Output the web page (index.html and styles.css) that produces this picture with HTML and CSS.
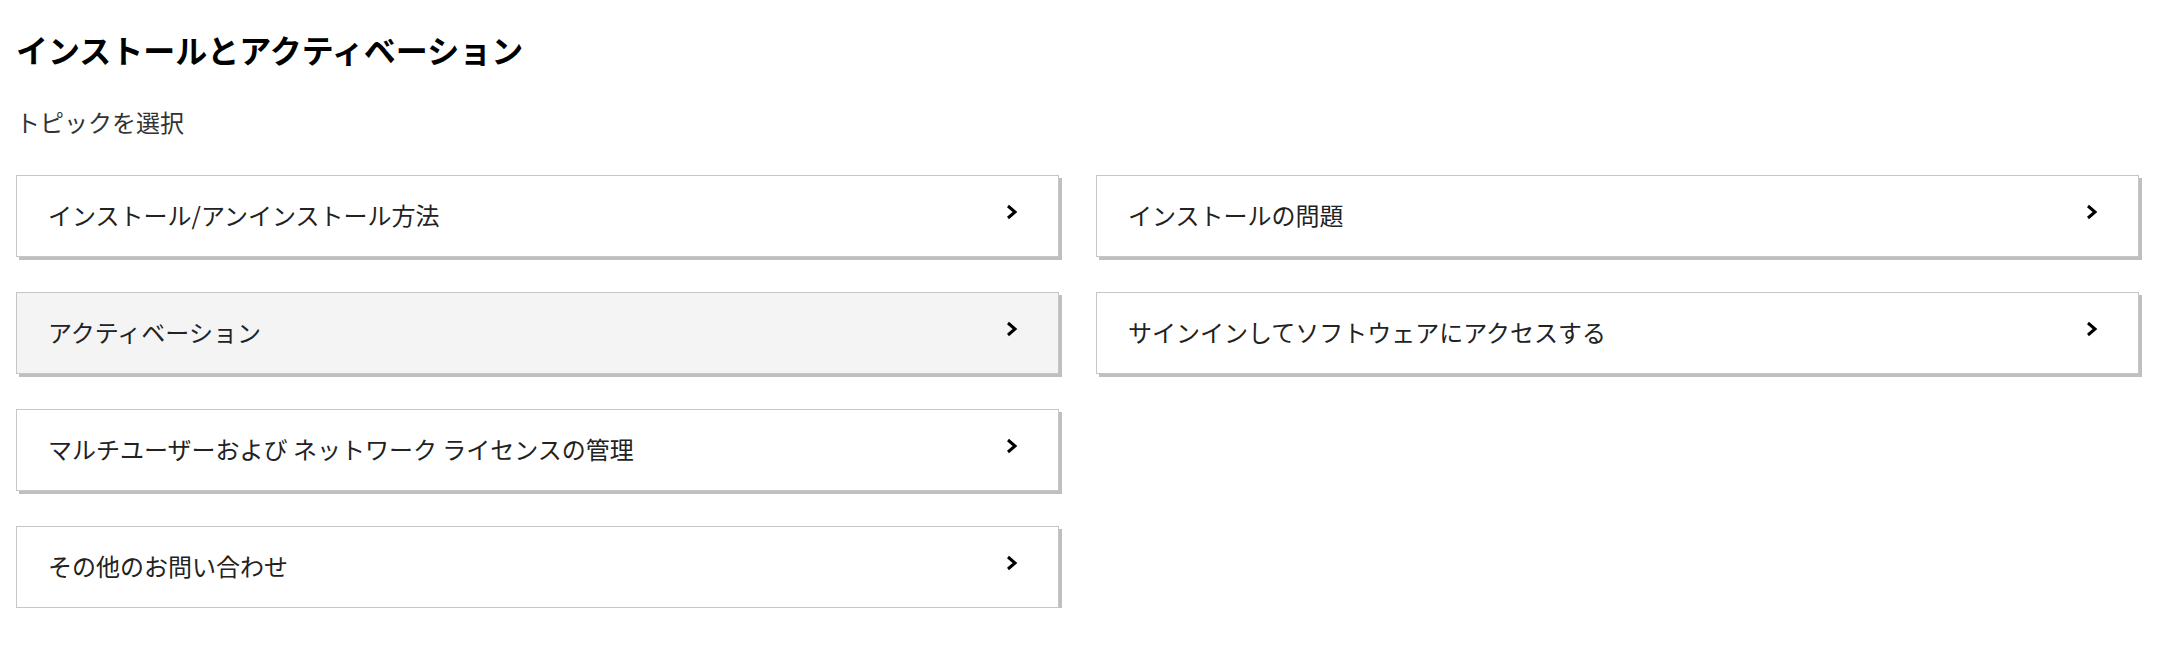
FILE: index.html
```html
<!DOCTYPE html>
<html lang="ja">

<head>
    <meta charset="UTF-8">
    <title>インストールとアクティベーション</title>
    <link rel="stylesheet" href="styles.css">
</head>

<body>
    <div class="page">
        <h1 class="title">インストールとアクティベーション</h1>
        <p class="lead">トピックを選択</p>

        <!--トピック一覧-->
        <div class="topics">
            <a class="topic" href="#">
                <span>インストール/アンインストール方法</span>
                <svg class="arrow" width="12" height="16" viewBox="0 0 12 16"><polyline points="2,2 9,8 2,14" /></svg>
            </a>
            <a class="topic" href="#">
                <span>インストールの問題</span>
                <svg class="arrow" width="12" height="16" viewBox="0 0 12 16"><polyline points="2,2 9,8 2,14" /></svg>
            </a>
            <a class="topic hover" href="#">
                <span>アクティベーション</span>
                <svg class="arrow" width="12" height="16" viewBox="0 0 12 16"><polyline points="2,2 9,8 2,14" /></svg>
            </a>
            <a class="topic" href="#">
                <span>サインインしてソフトウェアにアクセスする</span>
                <svg class="arrow" width="12" height="16" viewBox="0 0 12 16"><polyline points="2,2 9,8 2,14" /></svg>
            </a>
            <a class="topic" href="#">
                <span>マルチユーザーおよび ネットワーク ライセンスの管理</span>
                <svg class="arrow" width="12" height="16" viewBox="0 0 12 16"><polyline points="2,2 9,8 2,14" /></svg>
            </a>
            <div></div>
            <a class="topic" href="#">
                <span>その他のお問い合わせ</span>
                <svg class="arrow" width="12" height="16" viewBox="0 0 12 16"><polyline points="2,2 9,8 2,14" /></svg>
            </a>
        </div>
    </div>
</body>

</html>
```

FILE: styles.css
```css
* {
    margin: 0;
    padding: 0;
    box-sizing: border-box;
}

body {
    background: #fff;
    font-family: "Noto Sans CJK JP", "Noto Sans", sans-serif;
    color: #222;
}

.page {
    width: 2155px;
    padding: 29px 16px 0 16px;
}

.title {
    font-size: 32px;
    line-height: 40px;
    font-weight: bold;
    color: #000;
}

.lead {
    margin-top: 37px;
    font-size: 24px;
    line-height: 32px;
    color: #333;
}

.topics {
    margin-top: 37px;
    display: grid;
    grid-template-columns: 1fr 1fr;
    column-gap: 37px;
    row-gap: 35px;
}

.topic {
    display: flex;
    align-items: center;
    justify-content: space-between;
    height: 82px;
    padding: 0 40px 4px 31px;
    border: 1px solid #c6c6c6;
    box-shadow: 3px 3px 0 #bfbfbf;
    background: #fff;
    font-size: 24px;
    color: #222;
    text-decoration: none;
}

.topic.hover {
    background: #f4f4f4;
}

.arrow {
    margin-bottom: 4px;
}

.arrow polyline {
    fill: none;
    stroke: #000;
    stroke-width: 3;
}
```
